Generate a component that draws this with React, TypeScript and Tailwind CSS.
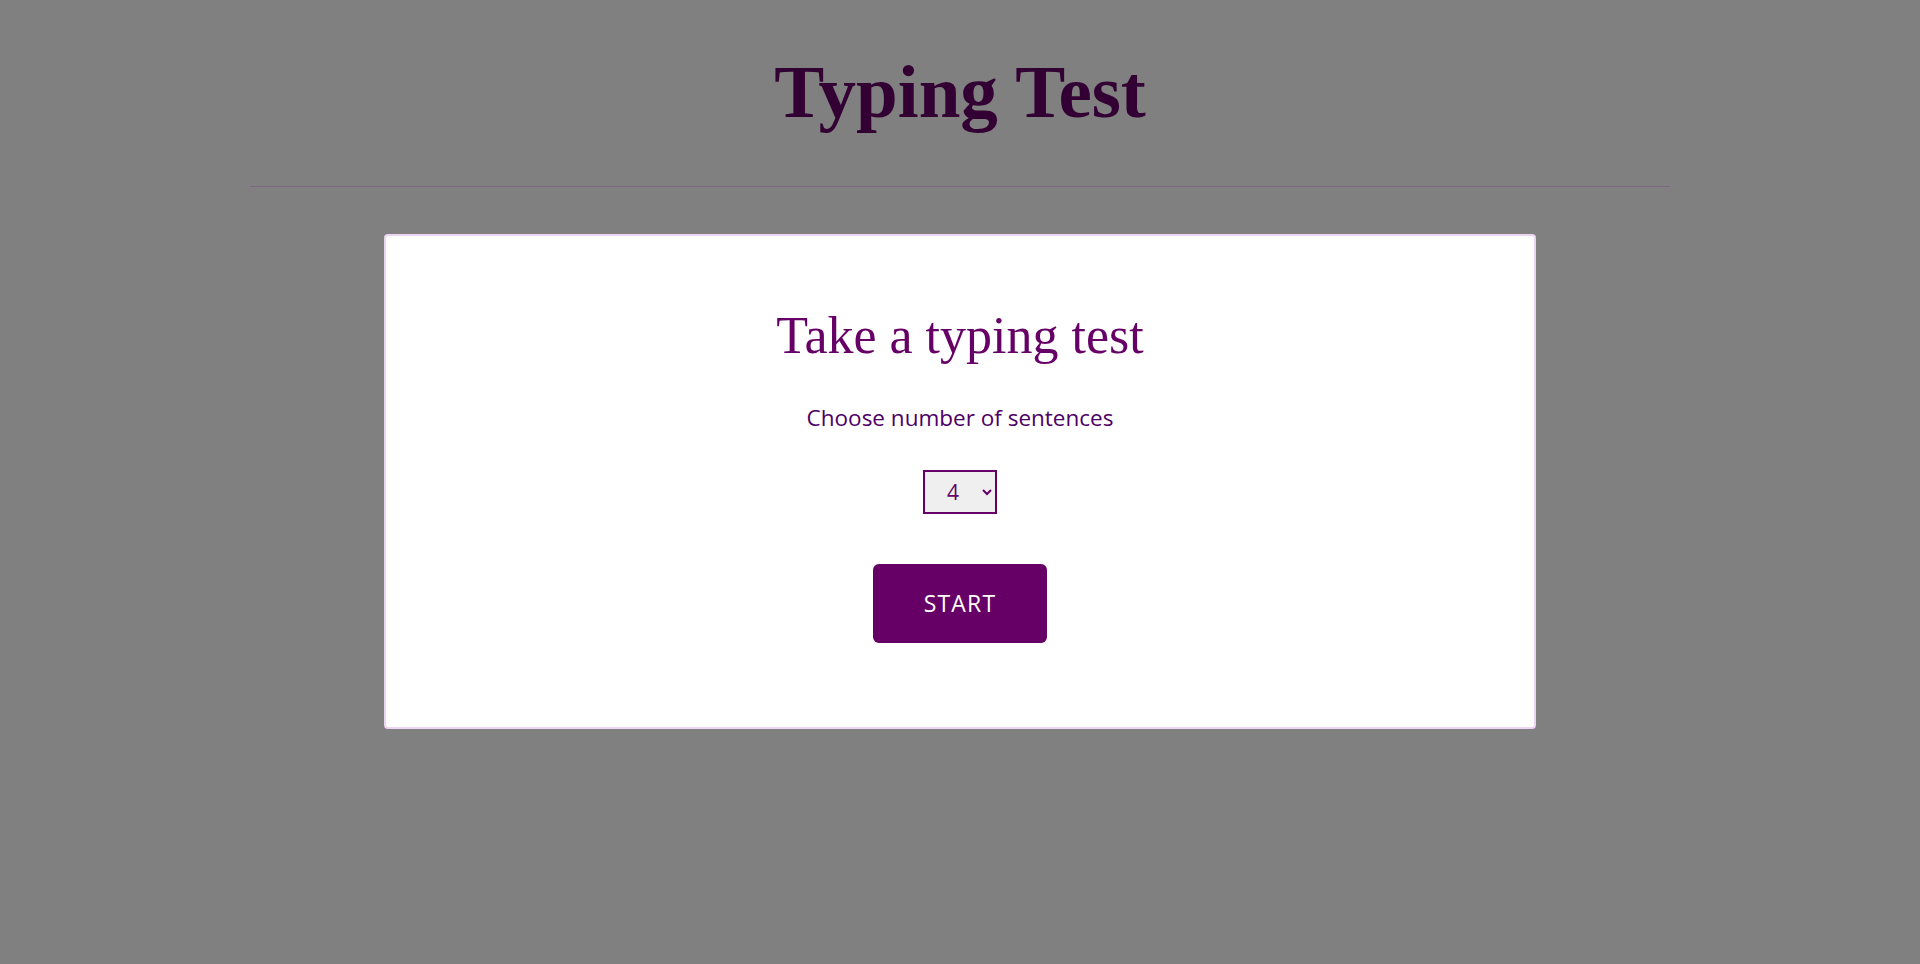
import React, { useState } from 'react';

const App: React.FC = () => {
  const [count, setCount] = useState('4');

  return (
    <div className="min-h-screen w-full bg-[#808080] font-['Open_Sans',_'Noto_Sans',_sans-serif]">
      {/* Header */}
      <header className="pt-[47px]">
        <h1 className="text-center font-['Liberation_Serif',_serif] text-[75px] leading-[90px] font-bold text-[#330033]">
          Typing Test
        </h1>
        <hr className="mx-auto mt-[49px] w-[1420px] border-0 border-t border-[#7e6884]" />
      </header>

      {/* Card */}
      <main className="mt-[47px] flex justify-center">
        <section className="flex h-[495px] w-[1152px] flex-col items-center rounded-[4px] border-2 border-[#ecd5f2] bg-white pt-[68px]">
          <h2 className="font-['Liberation_Serif',_serif] text-[52px] leading-[64px] text-[#660066]">
            Take a typing test
          </h2>
          <p className="mt-[35px] text-[22.5px] leading-[30px] text-[#4d0066]">
            Choose number of sentences
          </p>
          <select
            value={count}
            onChange={(e) => setCount(e.target.value)}
            className="mt-[37px] h-[44px] w-[74px] border-2 border-[#660066] bg-[#efefef] pl-[18px] text-[21px] text-[#660066]"
          >
            {[1, 2, 3, 4, 5, 6, 7, 8, 9, 10].map((n) => (
              <option key={n} value={n}>
                {n}
              </option>
            ))}
          </select>
          <button className="mt-[50px] h-[79px] w-[174px] rounded-[6px] bg-[#660066] text-[23px] tracking-[1.2px] text-white">
            START
          </button>
        </section>
      </main>
    </div>
  );
};

export default App;
